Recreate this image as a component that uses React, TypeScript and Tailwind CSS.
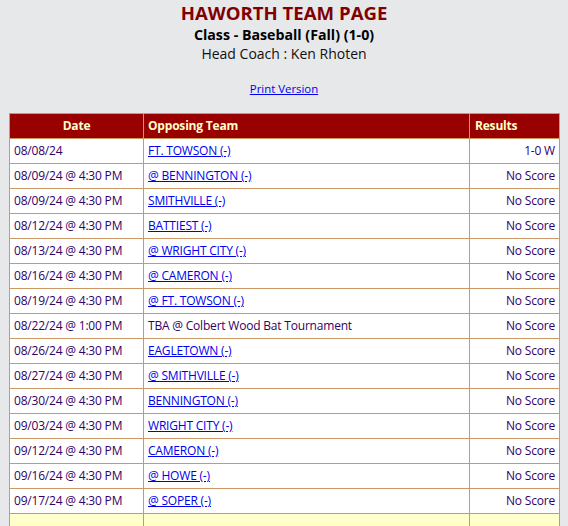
import React from "react";

const games: { date: string; opp: string; link: boolean; res: string }[] = [
  { date: "08/08/24", opp: "FT. TOWSON (-)", link: true, res: "1-0 W" },
  { date: "08/09/24 @ 4:30 PM", opp: "@ BENNINGTON (-)", link: true, res: "No Score" },
  { date: "08/09/24 @ 4:30 PM", opp: "SMITHVILLE (-)", link: true, res: "No Score" },
  { date: "08/12/24 @ 4:30 PM", opp: "BATTIEST (-)", link: true, res: "No Score" },
  { date: "08/13/24 @ 4:30 PM", opp: "@ WRIGHT CITY (-)", link: true, res: "No Score" },
  { date: "08/16/24 @ 4:30 PM", opp: "@ CAMERON (-)", link: true, res: "No Score" },
  { date: "08/19/24 @ 4:30 PM", opp: "@ FT. TOWSON (-)", link: true, res: "No Score" },
  { date: "08/22/24 @ 1:00 PM", opp: "TBA @ Colbert Wood Bat Tournament", link: false, res: "No Score" },
  { date: "08/26/24 @ 4:30 PM", opp: "EAGLETOWN (-)", link: true, res: "No Score" },
  { date: "08/27/24 @ 4:30 PM", opp: "@ SMITHVILLE (-)", link: true, res: "No Score" },
  { date: "08/30/24 @ 4:30 PM", opp: "BENNINGTON (-)", link: true, res: "No Score" },
  { date: "09/03/24 @ 4:30 PM", opp: "WRIGHT CITY (-)", link: true, res: "No Score" },
  { date: "09/12/24 @ 4:30 PM", opp: "CAMERON (-)", link: true, res: "No Score" },
  { date: "09/16/24 @ 4:30 PM", opp: "@ HOWE (-)", link: true, res: "No Score" },
  { date: "09/17/24 @ 4:30 PM", opp: "@ SOPER (-)", link: true, res: "No Score" },
];

export default function App() {
  return (
    <div
      className="w-[568px] h-[526px] overflow-hidden bg-[#e7e8ea]"
      style={{ fontFamily: '"Open Sans", "Noto Sans", sans-serif' }}
    >
      <div className="flex flex-col items-center">
        <h1 className="text-[18.6px] leading-[25px] font-bold text-[#800000]">
          HAWORTH TEAM PAGE
        </h1>
        <h2 className="text-[14.2px] leading-[19px] font-bold text-black">
          Class - Baseball (Fall) (1-0)
        </h2>
        <div className="text-[14px] leading-[20px] text-[#111]">Head Coach : Ken Rhoten</div>
        <a href="#" className="mt-[17px] text-[11.4px] leading-[16px] text-[#0000ee] underline">
          Print Version
        </a>
      </div>
      <table className="ml-[9px] mt-[16px] w-[550px] border-collapse text-[12px] tracking-[-0.2px] table-fixed">
        <colgroup>
          <col className="w-[134px]" />
          <col className="w-[326px]" />
          <col className="w-[90px]" />
        </colgroup>
        <thead>
          <tr className="bg-[#990000] text-[#ffffcc] font-bold h-[25px]">
            <th className="border border-[#cc9966] text-center px-[4px]">Date</th>
            <th className="border border-[#cc9966] text-left px-[4px]">Opposing Team</th>
            <th className="border border-[#cc9966] text-left px-[5px]">Results</th>
          </tr>
        </thead>
        <tbody>
          {games.map((g, i) => (
            <tr key={i} className="bg-white h-[25px] text-[#330066]">
              <td className="border border-[#cc9966] px-[4px] whitespace-nowrap">{g.date}</td>
              <td className="border border-[#cc9966] px-[4px] whitespace-nowrap">
                {g.link ? (
                  <a href="#" className="text-[#0000ee] underline">
                    {g.opp}
                  </a>
                ) : (
                  g.opp
                )}
              </td>
              <td className="border border-[#cc9966] px-[4px] text-right">{g.res}</td>
            </tr>
          ))}
          <tr className="bg-[#ffffcc] h-[25px]">
            <td className="border border-[#cc9966]"></td>
            <td className="border border-[#cc9966]"></td>
            <td className="border border-[#cc9966]"></td>
          </tr>
        </tbody>
      </table>
    </div>
  );
}
